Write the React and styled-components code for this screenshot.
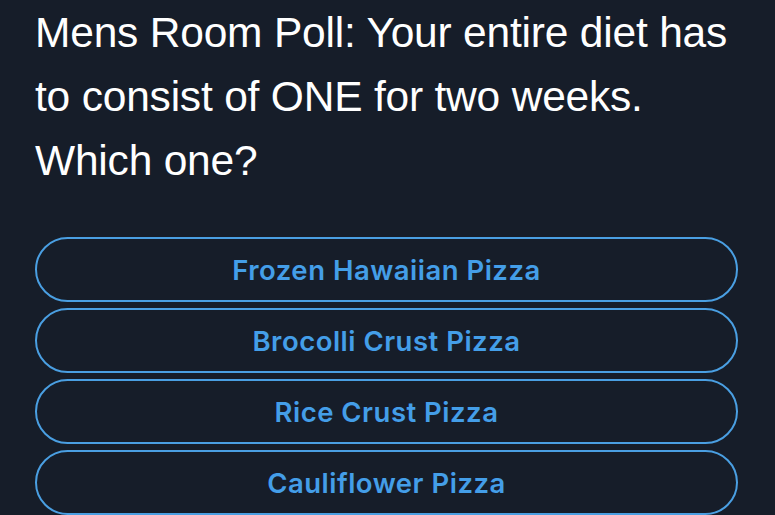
import React from "react";
import styled, { createGlobalStyle } from "styled-components";

const Global = createGlobalStyle`
  html, body { margin: 0; padding: 0; background: #161d29; }
  body { font-family: "Liberation Sans", Arial, sans-serif; }
`;

const Page = styled.div`
  width: 775px;
  height: 515px;
  overflow: hidden;
  background: #161d29;
  padding: 0 37px 0 35px;
  box-sizing: border-box;
`;

const Question = styled.p`
  margin: 0;
  padding-top: 1px;
  color: #ffffff;
  font-family: "Liberation Sans", Arial, sans-serif;
  font-size: 42.5px;
  line-height: 64px;
  letter-spacing: -0.2px;
  white-space: nowrap;
`;

const Options = styled.div`
  display: flex;
  flex-direction: column;
  gap: 6px;
  margin-top: 44px;
`;

const Option = styled.button`
  display: flex;
  align-items: center;
  justify-content: center;
  height: 65px;
  width: 100%;
  box-sizing: border-box;
  border: 2px solid #4a9fe2;
  border-radius: 33px;
  background: transparent;
  color: #449ee8;
  font-family: "Inter", "Liberation Sans", sans-serif;
  font-weight: 600;
  font-size: 27.5px;
  letter-spacing: 0.5px;
  padding: 0;
`;

const choices = [
  "Frozen Hawaiian Pizza",
  "Brocolli Crust Pizza",
  "Rice Crust Pizza",
  "Cauliflower Pizza",
];

export default function App() {
  return (
    <>
      <Global />
      <Page>
        <Question>
          Mens Room Poll: Your entire diet has
          <br />
          to consist of ONE for two weeks.
          <br />
          Which one?
        </Question>
        <Options>
          {choices.map((c) => (
            <Option key={c}>{c}</Option>
          ))}
        </Options>
      </Page>
    </>
  );
}
